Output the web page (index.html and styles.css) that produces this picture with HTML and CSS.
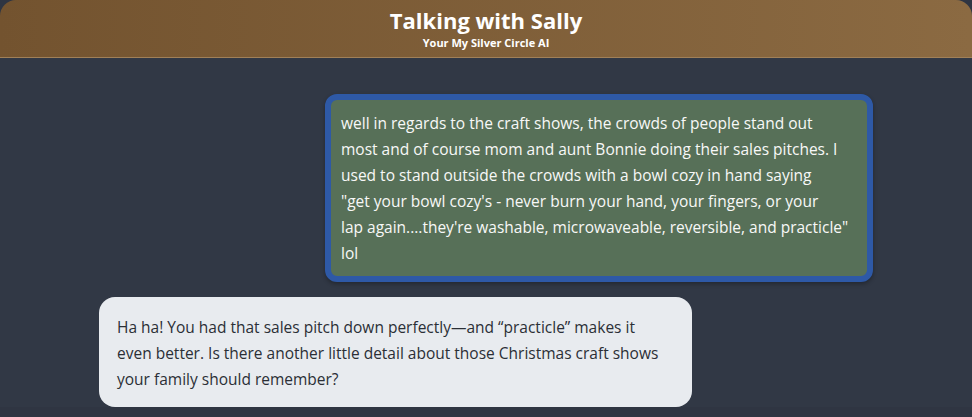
FILE: index.html
```html
<!DOCTYPE html>
<html lang="en">

<head>
    <meta charset="UTF-8">
    <meta name="viewport" content="width=device-width, initial-scale=1.0">
    <title>Talking with Sally</title>
    <link rel="stylesheet" href="styles.css">
</head>

<body>
    <div class="chat-window">
        <!-- Header -->
        <div class="chat-header">
            <h1 class="chat-title">Talking with Sally</h1>
            <div class="chat-subtitle">Your My Silver Circle AI</div>
        </div>

        <!-- Messages -->
        <div class="messages">
            <div class="message user">
                <div class="bubble">well in regards to the craft shows, the crowds of people stand out most and of course mom and aunt Bonnie doing their sales pitches. I used to stand outside the crowds with a bowl cozy in hand saying "get&nbsp;your bowl cozy's - never burn your hand, your fingers, or your lap&nbsp;again....they're washable, microwaveable, reversible, and practicle" lol</div>
            </div>
            <div class="message assistant">
                <div class="bubble">Ha ha! You had that sales pitch down perfectly—and “practicle” makes it<br>even better. Is there another little detail about those Christmas craft shows your family should remember?</div>
            </div>
        </div>
    </div>
</body>

</html>
```

FILE: styles.css
```css
body {
    background-color: #2f3542;
    font-family: "Open Sans", "Noto Sans", sans-serif;
    margin: 0;
    padding: 0;
}

.chat-window {
    height: 417px;
    overflow: hidden;
}

.chat-header {
    background: linear-gradient(90deg, #73532f 0%, #8b6a42 100%);
    border-bottom: 1px solid #a08058;
    border-radius: 16px 16px 0 0;
    height: 57px;
    display: flex;
    flex-direction: column;
    align-items: center;
    justify-content: center;
    color: white;
}

.chat-title {
    margin: 0;
    font-size: 22px;
    font-weight: 700;
    line-height: 24px;
}

.chat-subtitle {
    font-size: 11px;
    font-weight: 700;
    line-height: 13px;
    margin-top: 4px;
}

.messages {
    background-color: #313845;
    padding: 36px 99px 0 99px;
    display: flex;
    flex-direction: column;
    gap: 15px;
}

.message {
    display: flex;
}

.message.user {
    justify-content: flex-end;
}

.message.assistant {
    justify-content: flex-start;
}

.bubble {
    font-size: 15.5px;
    line-height: 26px;
}

.user .bubble {
    width: 508px;
    background-color: #577058;
    color: #f7f8f7;
    border: 6px solid #2e59a6;
    border-radius: 12px;
    padding: 10px 18px 10px 10px;
    box-shadow: 0 2px 4px rgba(0, 0, 0, 0.3);
}

.assistant .bubble {
    width: 557px;
    background-color: #e8ebef;
    color: #2b2f36;
    border-radius: 16px;
    padding: 17px 18px 15px 18px;
}
```
